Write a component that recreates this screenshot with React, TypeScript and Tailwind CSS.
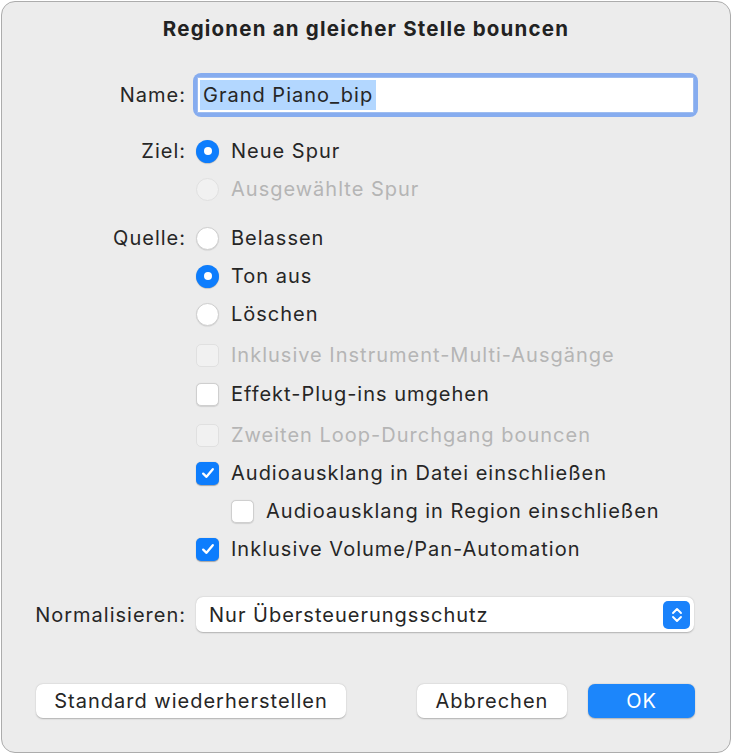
import React from "react"

function Radio({ checked, disabled }: { checked?: boolean; disabled?: boolean }) {
  if (checked) {
    return (
      <span className="flex h-[23px] w-[23px] shrink-0 items-center justify-center rounded-full bg-[#0d7dfd] shadow-[0_0.5px_1px_rgba(0,0,0,0.3)]">
        <span className="h-[8px] w-[8px] rounded-full bg-white" />
      </span>
    )
  }
  return (
    <span
      className={
        disabled
          ? "h-[23px] w-[23px] shrink-0 rounded-full border border-[#e0e0e0] bg-[#f1f1f1]"
          : "h-[23px] w-[23px] shrink-0 rounded-full border border-[#cfcfcf] bg-white shadow-[0_0.5px_1px_rgba(0,0,0,0.12)]"
      }
    />
  )
}

function Checkbox({ checked, disabled }: { checked?: boolean; disabled?: boolean }) {
  if (checked) {
    return (
      <span className="flex h-[23px] w-[23px] shrink-0 items-center justify-center rounded-[5px] bg-[#0d7dfd] shadow-[0_0.5px_1px_rgba(0,0,0,0.3)]">
        <svg viewBox="0 0 16 16" className="h-[16px] w-[16px]">
          <path d="M3.2 8.6 L6.5 11.8 L12.8 4.2" fill="none" stroke="white" strokeWidth="2.3" strokeLinecap="round" strokeLinejoin="round" />
        </svg>
      </span>
    )
  }
  return (
    <span
      className={
        disabled
          ? "h-[23px] w-[23px] shrink-0 rounded-[5px] border border-[#e0e0e0] bg-[#f1f1f1]"
          : "h-[23px] w-[23px] shrink-0 rounded-[5px] border border-[#cfcfcf] bg-white shadow-[0_0.5px_1px_rgba(0,0,0,0.12)]"
      }
    />
  )
}

function Row({
  label,
  children,
  className = "",
}: {
  label?: string
  children: React.ReactNode
  className?: string
}) {
  return (
    <div className={"flex h-[38px] items-center " + className}>
      <div className="w-[184px] shrink-0 text-right">{label}</div>
      <div className="ml-[10px] flex items-center">{children}</div>
    </div>
  )
}

function Option({
  kind,
  text,
  checked,
  disabled,
}: {
  kind: "radio" | "check"
  text: string
  checked?: boolean
  disabled?: boolean
}) {
  return (
    <>
      {kind === "radio" ? <Radio checked={checked} disabled={disabled} /> : <Checkbox checked={checked} disabled={disabled} />}
      <span className={"ml-[12px] " + (disabled ? "text-[#b5b5b5]" : "")}>{text}</span>
    </>
  )
}

export default function App() {
  return (
    <div className="h-[755px] w-[732px] bg-white pl-px pt-px">
      <div className="flex h-[752px] w-[730px] flex-col rounded-[14px] border border-[#acacac] bg-[#ececec] font-['Inter',sans-serif] text-[20px] leading-[24px] tracking-[1px] text-[#262626]">
        <h1 className="mt-[15px] text-center text-[20.5px] font-bold leading-[24px] tracking-[1.2px] text-[#222]">
          Regionen an gleicher Stelle bouncen
        </h1>

        <div className="mt-[32px] flex h-[44px] items-center">
          <div className="w-[184px] shrink-0 text-right">Name:</div>
          <div className="ml-[7px] h-[44px] w-[505px] rounded-[8px] bg-[#86acef] p-[4px]">
            <div className="flex h-full items-center border border-[#9dbcf0] bg-white pl-[2px]">
              <span className="bg-[#b3d7ff] px-[3px] py-[3px]">Grand Piano_bip</span>
            </div>
          </div>
        </div>

        <Row label="Ziel:" className="mt-[15px]">
          <Option kind="radio" text="Neue Spur" checked />
        </Row>
        <Row>
          <Option kind="radio" text="Ausgewählte Spur" disabled />
        </Row>

        <Row label="Quelle:" className="mt-[11px]">
          <Option kind="radio" text="Belassen" />
        </Row>
        <Row>
          <Option kind="radio" text="Ton aus" checked />
        </Row>
        <Row>
          <Option kind="radio" text="Löschen" />
        </Row>

        <Row className="mt-[3px]">
          <Option kind="check" text="Inklusive Instrument-Multi-Ausgänge" disabled />
        </Row>
        <Row className="mt-[1px]">
          <Option kind="check" text="Effekt-Plug-ins umgehen" />
        </Row>
        <Row className="mt-[3px]">
          <Option kind="check" text="Zweiten Loop-Durchgang bouncen" disabled />
        </Row>
        <Row>
          <Option kind="check" text="Audioausklang in Datei einschließen" checked />
        </Row>
        <Row>
          <div className="ml-[35px] flex items-center">
            <Option kind="check" text="Audioausklang in Region einschließen" />
          </div>
        </Row>
        <Row>
          <Option kind="check" text="Inklusive Volume/Pan-Automation" checked />
        </Row>

        <div className="mt-[29px] flex h-[35px] items-center">
          <div className="w-[184px] shrink-0 text-right">Normalisieren:</div>
          <div className="ml-[10px] flex h-[35px] w-[498px] items-center justify-between rounded-[7px] bg-white pl-[13px] pr-[4px] shadow-[0_0.5px_1.5px_rgba(0,0,0,0.25)]">
            <span>Nur Übersteuerungsschutz</span>
            <span className="flex h-[28px] w-[27px] items-center justify-center rounded-[5px] bg-[#1a82fb]">
              <svg viewBox="0 0 14 18" className="h-[18px] w-[14px]">
                <path d="M3 7 L7 3 L11 7" fill="none" stroke="white" strokeWidth="1.9" strokeLinecap="round" strokeLinejoin="round" />
                <path d="M3 11 L7 15 L11 11" fill="none" stroke="white" strokeWidth="1.9" strokeLinecap="round" strokeLinejoin="round" />
              </svg>
            </span>
          </div>
        </div>

        <div className="ml-[34px] mr-[35px] mt-[52px] flex h-[34px] items-center">
          <button className="h-[34px] w-[310px] rounded-[7px] bg-white tracking-[1px] shadow-[0_0.5px_1.5px_rgba(0,0,0,0.25)]">
            Standard wiederherstellen
          </button>
          <div className="flex-1" />
          <button className="h-[34px] w-[150px] rounded-[7px] bg-white tracking-[1px] shadow-[0_0.5px_1.5px_rgba(0,0,0,0.25)]">
            Abbrechen
          </button>
          <button className="ml-[21px] h-[34px] w-[107px] rounded-[7px] bg-[#1c86fb] tracking-[1px] text-white shadow-[0_0.5px_1.5px_rgba(0,0,0,0.25)]">
            OK
          </button>
        </div>
      </div>
    </div>
  )
}
